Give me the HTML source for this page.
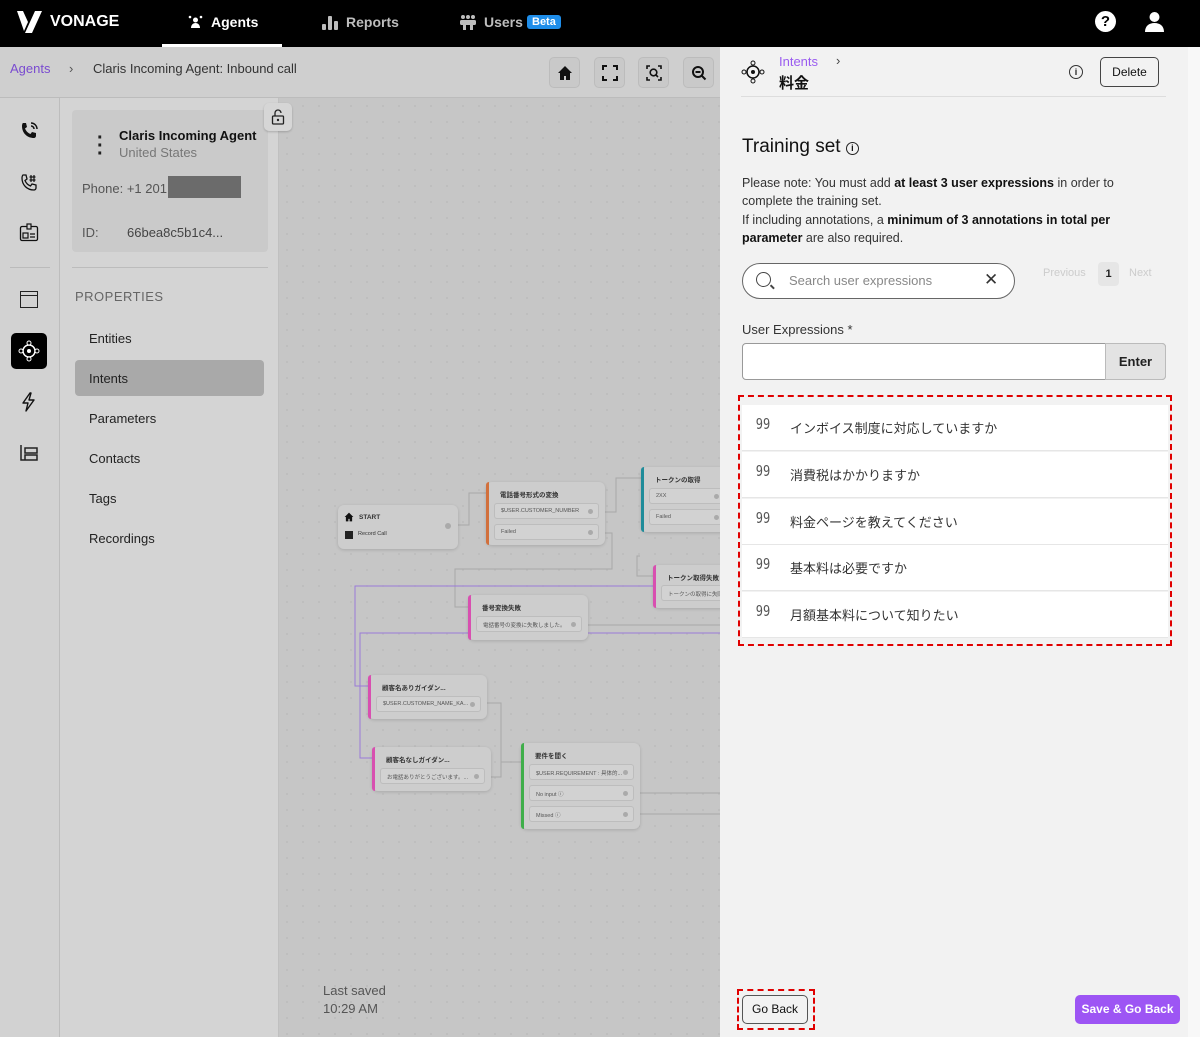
<!DOCTYPE html>
<html><head><meta charset="utf-8">
<style>
*{box-sizing:border-box;margin:0;padding:0}
body{width:1200px;height:1037px;overflow:hidden;position:relative;font-family:"Liberation Sans","Noto Sans CJK JP",sans-serif;background:#c6c6c6;color:#222}
.abs{position:absolute}
.hdr{left:0;top:0;width:1200px;height:47px;background:#000;color:#fff}
.nav{font-size:14px;font-weight:bold;color:#bdbdbd;top:14px}
.canvas{left:279px;top:98px;width:441px;height:939px;background-color:#c6c6c6;background-image:radial-gradient(#bcbcbc 0.8px,transparent 1px);background-size:16px 16px}
.node{position:absolute;background:#cdcdcd;border-radius:6px;box-shadow:0 1px 3px rgba(0,0,0,.15);font-size:6px;color:#333}
.node .bar{position:absolute;left:0;top:0;bottom:0;width:3px;border-radius:3px 0 0 3px}
.node .t{position:absolute;left:14px;top:7px;font-weight:bold;font-size:6.5px}
.row{position:absolute;left:8px;right:6px;height:16px;border:1px solid #bdbdbd;background:#d2d2d2;border-radius:3px;font-size:5.5px;color:#555;padding:4px 6px;white-space:nowrap;overflow:hidden}
.row:after{content:"";position:absolute;right:5px;top:5px;width:5px;height:5px;border-radius:50%;background:#aaa}
.panel{left:720px;top:47px;width:468px;height:990px;background:#f2f2f2}
.li{position:absolute;left:0;right:0;height:46px;background:#fff;border-bottom:1px solid #e6e6e6;font-size:13px;color:#333}
.li .q{position:absolute;left:12px;top:10px;font-size:15px;color:#555;letter-spacing:0px;font-family:"DejaVu Sans Mono",monospace;transform:scaleX(.8)}
.li .x{position:absolute;left:48px;top:13px}
.pi{font-size:13px;color:#222;left:89px}
</style></head><body>
<div class="abs hdr">
 <svg class="abs" style="left:17px;top:11px" width="26" height="22" viewBox="0 0 26 22"><path d="M0 0h6l5 11-4 9z" fill="#fff"/><path d="M18 0h7L15 22H8z" fill="#fff"/></svg>
 <div class="abs" style="left:50px;top:13px;font-size:16px;font-weight:bold;color:#fff">VONAGE</div>
 <svg class="abs" style="left:188px;top:15px" width="15" height="14" viewBox="0 0 15 14"><circle cx="7.5" cy="5" r="2.5" fill="#fff"/><path d="M3 13c0-3 2-5 4.5-5S12 10 12 13z" fill="#fff"/><circle cx="2" cy="2" r="1.3" fill="#fff"/><circle cx="13" cy="2" r="1.3" fill="#fff"/></svg>
 <div class="abs nav" style="left:211px;color:#fff">Agents</div>
 <div class="abs" style="left:162px;top:44px;width:120px;height:3px;background:#fff"></div>
 <svg class="abs" style="left:322px;top:14px" width="16" height="16" viewBox="0 0 16 16"><rect x="0" y="10" width="4" height="6" rx="1" fill="#bdbdbd"/><rect x="6" y="2" width="4" height="14" rx="1" fill="#bdbdbd"/><rect x="12" y="7" width="4" height="9" rx="1" fill="#bdbdbd"/></svg>
 <div class="abs nav" style="left:346px">Reports</div>
 <svg class="abs" style="left:459px;top:14px" width="18" height="16" viewBox="0 0 18 16"><circle cx="4" cy="3" r="2" fill="#bdbdbd"/><circle cx="9" cy="3" r="2" fill="#bdbdbd"/><circle cx="14" cy="3" r="2" fill="#bdbdbd"/><rect x="1" y="6" width="16" height="5" rx="1.5" fill="#bdbdbd"/><rect x="4" y="11" width="3" height="5" fill="#bdbdbd"/><rect x="11" y="11" width="3" height="5" fill="#bdbdbd"/></svg>
 <div class="abs nav" style="left:484px">Users</div>
 <div class="abs" style="left:527px;top:15px;background:#1f8eea;color:#fff;font-size:11px;font-weight:bold;padding:1px 5px;border-radius:3px">Beta</div>
 <div class="abs" style="left:1095px;top:11px;width:21px;height:21px;border-radius:50%;background:#fff;color:#000;font-weight:bold;font-size:15px;text-align:center;line-height:21px">?</div>
 <svg class="abs" style="left:1144px;top:11px" width="21" height="21" viewBox="0 0 21 21"><circle cx="10.5" cy="6" r="5" fill="#fff"/><path d="M1 21c0-6 4-9 9.5-9S20 15 20 21z" fill="#fff"/></svg>
</div>
<div class="abs" style="left:0;top:47px;width:720px;height:51px;background:#cfcfcf;border-bottom:1px solid #bcbcbc"></div>
<div class="abs" style="left:10px;top:61px;font-size:13px;color:#7a4bd0">Agents</div>
<div class="abs" style="left:69px;top:61px;font-size:13px;color:#555">›</div>
<div class="abs" style="left:93px;top:61px;font-size:13px;color:#333">Claris Incoming Agent: Inbound call</div>
<div class="abs" style="left:549px;top:57px;width:31px;height:31px;border-radius:5px;background:#c9c9c9;border:1px solid #bcbcbc"><svg class="abs" style="left:7px;top:7px" width="16" height="16" viewBox="0 0 16 16"><path d="M8 1L1 8h2v7h4v-4h2v4h4V8h2z" fill="#111"/></svg></div>
<div class="abs" style="left:594px;top:57px;width:31px;height:31px;border-radius:5px;background:#c9c9c9;border:1px solid #bcbcbc"><svg class="abs" style="left:7px;top:7px" width="16" height="16" viewBox="0 0 16 16"><path d="M1 5V1h4M11 1h4v4M15 11v4h-4M5 15H1v-4" fill="none" stroke="#111" stroke-width="2"/></svg></div>
<div class="abs" style="left:638px;top:57px;width:31px;height:31px;border-radius:5px;background:#c9c9c9;border:1px solid #bcbcbc"><svg class="abs" style="left:7px;top:7px" width="16" height="16" viewBox="0 0 16 16"><path d="M1 4V1h3M12 1h3v3M15 12v3h-3M4 15H1v-3" fill="none" stroke="#111" stroke-width="1.6"/><circle cx="7.5" cy="7.5" r="3.3" fill="none" stroke="#111" stroke-width="1.6"/><path d="M10 10l2 2" stroke="#111" stroke-width="1.6"/></svg></div>
<div class="abs" style="left:683px;top:57px;width:31px;height:31px;border-radius:5px;background:#c9c9c9;border:1px solid #bcbcbc"><svg class="abs" style="left:7px;top:7px" width="16" height="16" viewBox="0 0 16 16"><circle cx="7" cy="7" r="5" fill="none" stroke="#111" stroke-width="2"/><path d="M4.5 7h5M11 11l3.5 3.5" stroke="#111" stroke-width="2"/></svg></div>
<div class="abs" style="left:0;top:98px;width:60px;height:939px;background:#d2d2d2;border-right:1px solid #bdbdbd"></div>
<svg class="abs" style="left:19px;top:121px" width="20" height="20" viewBox="0 0 20 20"><path d="M4 2l3 0 1 4-2 1.5c1 2.5 3 4.5 5.5 5.5L13 11l4 1v3c0 1-1 2-2 2C8 17 3 12 3 5c0-1 .5-3 1-3z" fill="#111"/><path d="M12 2a6 6 0 016 6M12 5a3 3 0 013 3" fill="none" stroke="#111" stroke-width="1.5"/></svg>
<svg class="abs" style="left:19px;top:172px" width="20" height="20" viewBox="0 0 20 20"><path d="M4 3l3 0 1 4-2 1.5c1 2.5 3 4.5 5.5 5.5L13 12l4 1v3c0 1-1 2-2 2C8 18 3 13 3 6c0-1 .5-3 1-3z" fill="none" stroke="#111" stroke-width="1.3"/><path d="M12 3v7M15 3v7M10.5 5h6M10.5 8h6" stroke="#111" stroke-width="1.2"/></svg>
<svg class="abs" style="left:19px;top:223px" width="20" height="20" viewBox="0 0 20 20"><rect x="1.5" y="3.5" width="17" height="14" rx="1.5" fill="none" stroke="#111" stroke-width="1.3"/><rect x="8" y="1" width="4" height="5" fill="#d2d2d2" stroke="#111" stroke-width="1.2"/><rect x="4" y="10" width="5" height="5" fill="none" stroke="#111" stroke-width="1.2"/><path d="M11 11h5M11 14h5" stroke="#111" stroke-width="1.2"/></svg>
<div class="abs" style="left:10px;top:267px;width:40px;height:1px;background:#bbb"></div>
<div class="abs" style="left:20px;top:291px;width:18px;height:17px;border:1.5px solid #222"><div style="height:4px;border-bottom:1.5px solid #222"></div></div>
<div class="abs" style="left:11px;top:333px;width:36px;height:36px;background:#000;border-radius:5px"><svg width="36" height="36" viewBox="0 0 36 36"><circle cx="18" cy="18" r="6" fill="none" stroke="#fff" stroke-width="1.5"/><circle cx="18" cy="18" r="2" fill="#fff"/><circle cx="18" cy="10" r="2" fill="#000" stroke="#fff"/><circle cx="18" cy="26" r="2" fill="#000" stroke="#fff"/><circle cx="10" cy="18" r="2" fill="#000" stroke="#fff"/><circle cx="26" cy="18" r="2" fill="#000" stroke="#fff"/></svg></div>
<svg class="abs" style="left:20px;top:392px" width="18" height="20" viewBox="0 0 18 20"><path d="M10 1L3 11h5l-2 8 8-11H9l2-7z" fill="none" stroke="#111" stroke-width="1.4" stroke-linejoin="round"/></svg>
<svg class="abs" style="left:19px;top:444px" width="20" height="20" viewBox="0 0 20 20"><path d="M2 1v15h4M6 4h12v5H6zM6 11h12v5H6z" fill="none" stroke="#222" stroke-width="1.5"/></svg>
<div class="abs" style="left:60px;top:98px;width:219px;height:939px;background:#d4d4d4;border-right:1px solid #c0c0c0"></div>
<div class="abs" style="left:72px;top:110px;width:196px;height:142px;background:#cacaca;border-radius:4px"></div>
<div class="abs" style="left:97px;top:134px;font-size:20px;font-weight:bold;line-height:8px">·<br>·<br>·</div>
<div class="abs" style="left:119px;top:128px;font-size:13px;font-weight:bold;color:#111">Claris Incoming Agent</div>
<div class="abs" style="left:119px;top:145px;font-size:13px;color:#777">United States</div>
<div class="abs" style="left:82px;top:181px;font-size:13px;color:#555">Phone: +1 201</div>
<div class="abs" style="left:168px;top:176px;width:73px;height:22px;background:#6b6b6b"></div>
<div class="abs" style="left:82px;top:225px;font-size:13px;color:#555">ID:</div>
<div class="abs" style="left:127px;top:225px;font-size:13px;color:#444">66bea8c5b1c4...</div>
<div class="abs" style="left:72px;top:267px;width:196px;height:1px;background:#bcbcbc"></div>
<div class="abs" style="left:75px;top:289px;font-size:13px;color:#666;letter-spacing:.5px">PROPERTIES</div>
<div class="abs pi" style="top:331px">Entities</div>
<div class="abs" style="left:75px;top:360px;width:189px;height:36px;background:#a9a9a9;border-radius:4px"></div>
<div class="abs pi" style="top:371px">Intents</div>
<div class="abs pi" style="top:411px">Parameters</div>
<div class="abs pi" style="top:451px">Contacts</div>
<div class="abs pi" style="top:491px">Tags</div>
<div class="abs pi" style="top:531px">Recordings</div>
<div class="abs canvas"></div>
<div class="abs" style="left:264px;top:103px;width:28px;height:28px;background:#d6d6d6;border-radius:5px;box-shadow:0 1px 2px rgba(0,0,0,.2);z-index:5"><svg class="abs" style="left:7px;top:6px" width="14" height="16" viewBox="0 0 14 16"><path d="M4 7V4a3 3 0 016 0" fill="none" stroke="#222" stroke-width="1.3"/><rect x="1.5" y="7" width="11" height="8" rx="1" fill="none" stroke="#222" stroke-width="1.3"/><circle cx="7" cy="11" r="1.2" fill="#222"/></svg></div>
<svg class="abs" style="left:279px;top:98px" width="441" height="939" viewBox="279 98 441 939">
<g fill="none" stroke="#a8a8a8" stroke-width="1">
<path d="M458 525h11v-32h17"/><path d="M605 512h11v-34h25"/><path d="M605 533h7v36h-157v38h13"/><path d="M640 556h-3v20h16"/><path d="M588 625h132"/><path d="M487 703h14v59h20"/><path d="M491 777h10v-15"/><path d="M640 793h80"/><path d="M640 814h80"/>
</g>
<g fill="none" stroke="#9a7ad8" stroke-width="1"><path d="M720 586H355v100h13"/><path d="M720 633H360v125h12"/></g>
</svg>
<div class="node" style="left:338px;top:505px;width:120px;height:44px"><svg class="abs" style="left:6px;top:7px" width="10" height="10" viewBox="0 0 16 16"><path d="M8 1L1 8h2v7h4v-4h2v4h4V8h2z" fill="#111"/></svg><div class="t" style="left:21px;top:9px">START</div><div class="abs" style="left:7px;top:26px;width:8px;height:8px;background:#222"></div><div class="abs" style="left:20px;top:26px;font-size:5.5px">Record Call</div><div class="abs" style="left:107px;top:18px;width:6px;height:6px;border-radius:50%;background:#aaa"></div></div>
<div class="node" style="left:486px;top:482px;width:119px;height:63px"><div class="bar" style="background:#d2703c"></div><div class="t">電話番号形式の変換</div><div class="row" style="top:21px">$USER.CUSTOMER_NUMBER</div><div class="row" style="top:42px">Failed</div></div>
<div class="node" style="left:641px;top:467px;width:90px;height:65px"><div class="bar" style="background:#1f8c9a"></div><div class="t">トークンの取得</div><div class="row" style="top:21px">2XX</div><div class="row" style="top:42px">Failed</div></div>
<div class="node" style="left:653px;top:565px;width:80px;height:43px"><div class="bar" style="background:#d84fb0"></div><div class="t">トークン取得失敗</div><div class="row" style="top:20px">トークンの取得に失敗</div></div>
<div class="node" style="left:468px;top:595px;width:120px;height:45px"><div class="bar" style="background:#d84fb0"></div><div class="t">番号変換失敗</div><div class="row" style="top:21px">電話番号の変換に失敗しました。</div></div>
<div class="node" style="left:368px;top:675px;width:119px;height:44px"><div class="bar" style="background:#d84fb0"></div><div class="t">顧客名ありガイダン...</div><div class="row" style="top:21px">$USER.CUSTOMER_NAME_KA...</div></div>
<div class="node" style="left:372px;top:747px;width:119px;height:44px"><div class="bar" style="background:#d84fb0"></div><div class="t">顧客名なしガイダン...</div><div class="row" style="top:21px">お電話ありがとうございます。...</div></div>
<div class="node" style="left:521px;top:743px;width:119px;height:86px"><div class="bar" style="background:#3fae4a"></div><div class="t">要件を聞く</div><div class="row" style="top:21px">$USER.REQUIREMENT : 具体的...</div><div class="row" style="top:42px">No input ⓘ</div><div class="row" style="top:63px">Missed ⓘ</div></div>
<div class="abs" style="left:323px;top:982px;font-size:13px;color:#555;line-height:18px">Last saved<br>10:29 AM</div>
<div class="abs panel"></div>
<div class="abs" style="left:1188px;top:47px;width:12px;height:990px;background:#f8f8f8"></div>
<svg class="abs" style="left:741px;top:60px" width="24" height="24" viewBox="0 0 24 24"><circle cx="12" cy="12" r="6" fill="none" stroke="#111" stroke-width="1.5"/><circle cx="12" cy="12" r="2" fill="#111"/><circle cx="12" cy="3" r="2" fill="#f2f2f2" stroke="#111"/><circle cx="12" cy="21" r="2" fill="#f2f2f2" stroke="#111"/><circle cx="3" cy="12" r="2" fill="#f2f2f2" stroke="#111"/><circle cx="21" cy="12" r="2" fill="#f2f2f2" stroke="#111"/></svg>
<div class="abs" style="left:779px;top:54px;font-size:13px;color:#9a5cf0">Intents</div>
<div class="abs" style="left:836px;top:53px;font-size:13px;color:#444">›</div>
<div class="abs" style="left:779px;top:72px;font-size:15px;font-weight:bold;color:#111">料金</div>
<div class="abs" style="left:1069px;top:65px;width:14px;height:14px;border:1.3px solid #333;border-radius:50%;font-size:9px;text-align:center;line-height:12px;font-weight:bold">i</div>
<div class="abs" style="left:1100px;top:57px;width:59px;height:30px;border:1px solid #444;border-radius:5px;font-size:12px;text-align:center;line-height:28px;color:#111">Delete</div>
<div class="abs" style="left:741px;top:96px;width:425px;height:1px;background:#ddd"></div>
<div class="abs" style="left:742px;top:136px;font-size:19px;color:#111">Training set <span style="display:inline-block;width:13px;height:13px;border:1.3px solid #222;border-radius:50%;font-size:9px;text-align:center;line-height:11px;font-weight:bold;vertical-align:1px">i</span></div>
<div class="abs" style="left:742px;top:174px;width:420px;font-size:12.5px;line-height:18.3px;color:#333">Please note: You must add <b style="color:#111">at least 3 user expressions</b> in order to complete the training set.<br>If including annotations, a <b style="color:#111">minimum of 3 annotations in total per parameter</b> are also required.</div>
<div class="abs" style="left:742px;top:263px;width:273px;height:36px;border:1px solid #666;border-radius:18px;background:#fff"></div>
<div class="abs" style="left:756px;top:272px;width:15px;height:15px;border:1.5px solid #444;border-radius:50%"></div>
<div class="abs" style="left:770px;top:286px;width:5px;height:1.5px;background:#444;transform:rotate(45deg)"></div>
<div class="abs" style="left:789px;top:273px;font-size:13px;color:#888">Search user expressions</div>
<div class="abs" style="left:984px;top:270px;font-size:17px;color:#333">✕</div>
<div class="abs" style="left:1043px;top:267px;font-size:11px;color:#ccc">Previous</div>
<div class="abs" style="left:1098px;top:262px;width:21px;height:24px;background:#e6e6e6;border-radius:4px;font-size:11px;font-weight:bold;text-align:center;line-height:24px">1</div>
<div class="abs" style="left:1129px;top:267px;font-size:11px;color:#ccc">Next</div>
<div class="abs" style="left:742px;top:322px;font-size:13px;color:#333">User Expressions *</div>
<div class="abs" style="left:742px;top:343px;width:424px;height:37px;border:1px solid #999;border-radius:4px;background:#fff"></div>
<div class="abs" style="left:1105px;top:343px;width:61px;height:37px;background:#e3e3e3;border:1px solid #bbb;border-radius:0 4px 4px 0;font-size:13px;font-weight:bold;text-align:center;line-height:35px;color:#222">Enter</div>
<div class="abs" style="left:738px;top:395px;width:434px;height:251px;border:2px dashed #e00000"></div>
<div class="abs" style="left:742px;top:405px;width:426px;height:233px">
 <div class="li" style="top:0"><span class="q">99</span><span class="x">インボイス制度に対応していますか</span></div>
 <div class="li" style="top:47px"><span class="q">99</span><span class="x">消費税はかかりますか</span></div>
 <div class="li" style="top:94px"><span class="q">99</span><span class="x">料金ページを教えてください</span></div>
 <div class="li" style="top:140px"><span class="q">99</span><span class="x">基本料は必要ですか</span></div>
 <div class="li" style="top:187px"><span class="q">99</span><span class="x">月額基本料について知りたい</span></div>
</div>
<div class="abs" style="left:737px;top:989px;width:78px;height:41px;border:2px dashed #e00000"></div>
<div class="abs" style="left:742px;top:995px;width:66px;height:29px;border:1px solid #555;border-radius:5px;font-size:12px;text-align:center;line-height:27px;color:#111">Go Back</div>
<div class="abs" style="left:1075px;top:995px;width:105px;height:29px;background:#9d55f4;border-radius:5px;font-size:12px;font-weight:bold;text-align:center;line-height:29px;color:#fff">Save &amp; Go Back</div>
</body></html>
